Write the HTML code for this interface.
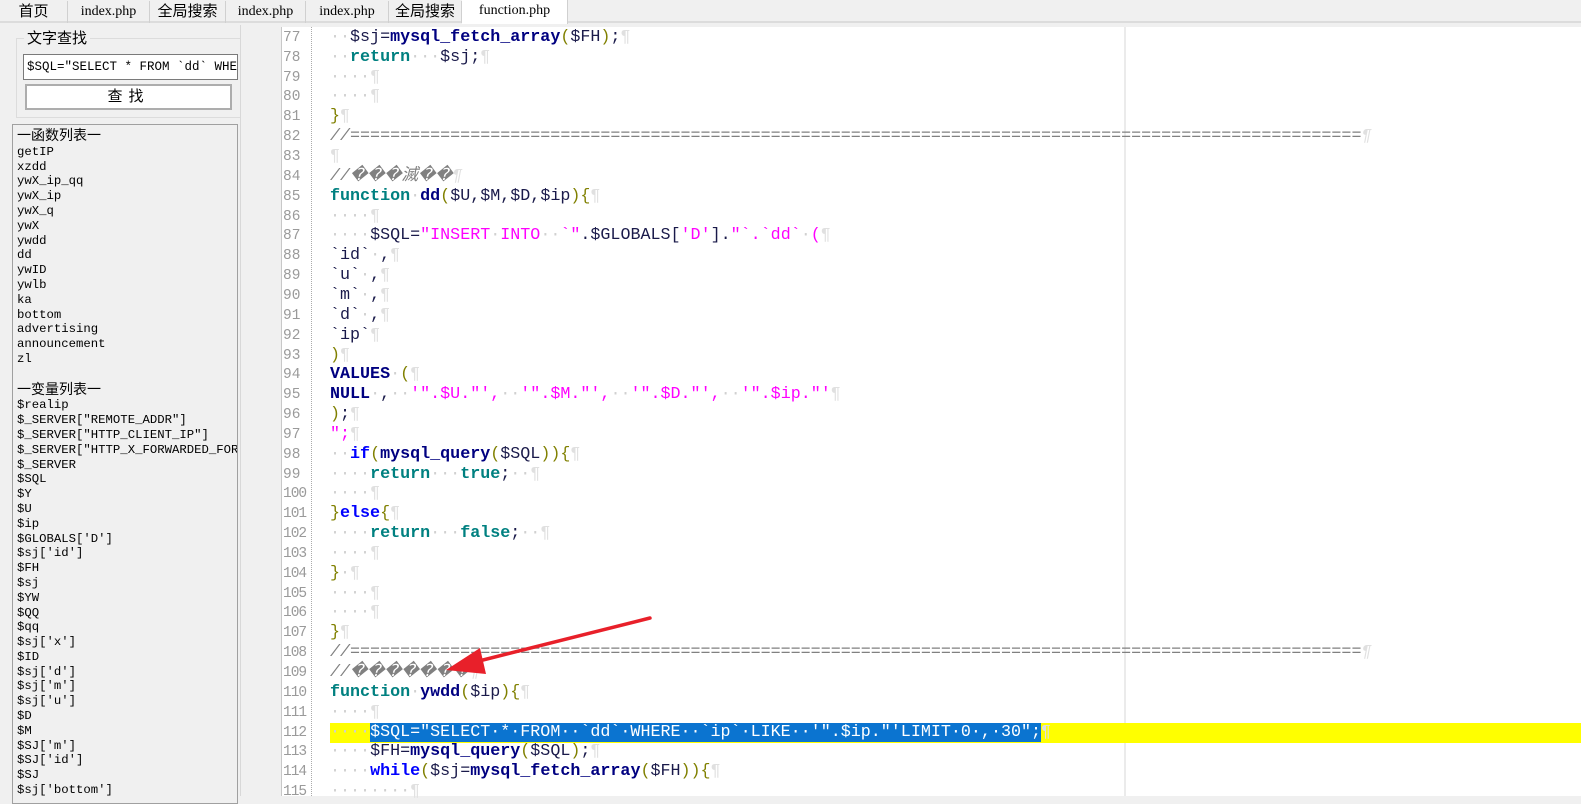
<!DOCTYPE html>
<html><head><meta charset="utf-8"><style>
*{margin:0;padding:0;box-sizing:border-box}
body{width:1581px;height:796px;overflow:hidden;background:#f0f0f0;position:relative;font-family:"Liberation Sans","Noto Sans CJK SC",sans-serif}
.tabs{position:absolute;left:0;top:0;width:1581px;height:23px;background:#f0f0f0;border-bottom:2px solid #dcdcdc}
.tab{position:absolute;top:1px;height:22px;border-right:1px solid #d0d0d0;font-size:15px;line-height:22px;text-align:center;color:#000}
.tab.m{font-family:"Liberation Serif","Noto Serif CJK SC",serif;font-size:14px}
.tab.act{background:#fff;top:0;height:24px}
.gb{position:absolute;left:16px;top:38px;width:225px;height:80px;border:1px solid #dcdcdc}
.gbl{position:absolute;left:24px;top:27px;background:#f0f0f0;padding:0 3px;font-size:15px}
.inp{position:absolute;left:23px;top:54px;width:215px;height:26px;background:#fff;border:1px solid #7a7a7a;font-family:"Liberation Mono",monospace;font-size:12.5px;line-height:24px;padding-left:3px;white-space:nowrap;overflow:hidden}
.btn{position:absolute;left:25px;top:84px;width:207px;height:26px;background:#fff;border:2px solid #adadad;font-size:15px;text-align:center;line-height:22px;letter-spacing:6px}
.list{position:absolute;left:12px;top:124px;width:226px;height:680px;border:1px solid #a0a0a0;background:#f0f0f0;overflow:hidden;padding:3px 0 0 4px;font-family:"Liberation Mono","Noto Sans CJK SC",monospace;font-size:12.3px;line-height:14.8px;white-space:pre;color:#000}
.list .h{font-family:"Liberation Sans","Noto Sans CJK SC",sans-serif;font-size:14px}
.sep{position:absolute;left:240px;top:25px;width:41px;height:771px;background:#f0f0f0;border-left:1px solid #d8d8d8}
.ed{position:absolute;left:281px;top:27px;width:1300px;height:769px;background:#fff;border-left:1px solid #c8c8c8}
.gut{position:absolute;left:282px;top:27px;width:30px;height:769px;border-right:1px dotted #aaa}
.guide{position:absolute;left:1124px;top:27px;width:2px;height:769px;background:#ebebeb}
.ln{position:absolute;left:283px;width:28px;font-family:"Liberation Mono",monospace;font-size:14.5px;color:#9a9a9a;height:20px;line-height:20px}
.cl{position:absolute;left:330px;height:20px;line-height:20px;font-family:"Liberation Mono",monospace;font-size:16.7px;white-space:pre;color:#1a1a4a}
.d{color:#d0d0d0;font-weight:normal}
.p{color:#e0e0e0;font-weight:normal}
.k{color:#008080;font-weight:bold}
.b{color:#0000ff;font-weight:bold}
.f{color:#000080;font-weight:bold}
.s{color:#ff00ff}
.c{color:#808080;font-style:italic}
.o{color:#808000}
.hl{position:absolute;left:330px;top:723px;width:1251px;height:20px;background:#ffff00}
.sel{background:#0b74d0;color:#fff}
</style></head><body>
<div class="tabs">
<div class="tab" style="left:0;width:68px">首页</div>
<div class="tab m" style="left:68px;width:82px">index.php</div>
<div class="tab" style="left:150px;width:76px">全局搜索</div>
<div class="tab m" style="left:226px;width:80px">index.php</div>
<div class="tab m" style="left:306px;width:83px">index.php</div>
<div class="tab" style="left:389px;width:73px">全局搜索</div>
<div class="tab m act" style="left:462px;width:106px">function.php</div>
</div>
<div class="gb"></div><div class="gbl">文字查找</div>
<div class="inp">$SQL="SELECT * FROM  `dd` WHERE</div>
<div class="btn">查找</div>
<div class="list"><span class="h">一函数列表一</span>
getIP
xzdd
ywX_ip_qq
ywX_ip
ywX_q
ywX
ywdd
dd
ywID
ywlb
ka
bottom
advertising
announcement
zl

<span class="h">一变量列表一</span>
$realip
$_SERVER["REMOTE_ADDR"]
$_SERVER["HTTP_CLIENT_IP"]
$_SERVER["HTTP_X_FORWARDED_FOR"]
$_SERVER
$SQL
$Y
$U
$ip
$GLOBALS['D']
$sj['id']
$FH
$sj
$YW
$QQ
$qq
$sj['x']
$ID
$sj['d']
$sj['m']
$sj['u']
$D
$M
$SJ['m']
$SJ['id']
$SJ
$sj['bottom']</div>
<div class="sep"></div>
<div class="ed"></div>
<div class="gut"></div>
<div class="guide"></div>
<div class="hl"></div>

<div class="cl" style="top:28px"><span class="d">··</span>$sj=<span class="f">mysql_fetch_array</span><span class="o">(</span>$FH<span class="o">)</span>;<span class="p">¶</span></div>
<div class="cl" style="top:48px"><span class="d">··</span><span class="k">return</span><span class="d">···</span>$sj;<span class="p">¶</span></div>
<div class="cl" style="top:68px"><span class="d">····</span><span class="p">¶</span></div>
<div class="cl" style="top:87px"><span class="d">····</span><span class="p">¶</span></div>
<div class="cl" style="top:107px"><span class="o">}</span><span class="p">¶</span></div>
<div class="cl c" style="top:127px">//=====================================================================================================<span class="p">¶</span></div>
<div class="cl" style="top:147px"><span class="p">¶</span></div>
<div class="cl c" style="top:167px">//���滅��<span class="p">¶</span></div>
<div class="cl" style="top:187px"><span class="k">function</span><span class="d">·</span><span class="f">dd</span><span class="o">(</span>$U,$M,$D,$ip<span class="o">){</span><span class="p">¶</span></div>
<div class="cl" style="top:207px"><span class="d">····</span><span class="p">¶</span></div>
<div class="cl" style="top:226px"><span class="d">····</span>$SQL=<span class="s">"INSERT<span class="d">·</span>INTO<span class="d">··</span>`"</span>.$GLOBALS[<span class="s">'D'</span>].<span class="s">"`.`dd`<span class="d">·</span>(</span><span class="p">¶</span></div>
<div class="cl" style="top:246px">`id`<span class="d">·</span>,<span class="p">¶</span></div>
<div class="cl" style="top:266px">`u`<span class="d">·</span>,<span class="p">¶</span></div>
<div class="cl" style="top:286px">`m`<span class="d">·</span>,<span class="p">¶</span></div>
<div class="cl" style="top:306px">`d`<span class="d">·</span>,<span class="p">¶</span></div>
<div class="cl" style="top:326px">`ip`<span class="p">¶</span></div>
<div class="cl" style="top:346px"><span class="o">)</span><span class="p">¶</span></div>
<div class="cl" style="top:365px"><span class="f">VALUES</span><span class="d">·</span><span class="o">(</span><span class="p">¶</span></div>
<div class="cl" style="top:385px"><span class="f">NULL</span><span class="d">·</span>,<span class="d">··</span><span class="s">'".$U."',<span class="d">··</span>'".$M."',<span class="d">··</span>'".$D."',<span class="d">··</span>'".$ip."'</span><span class="p">¶</span></div>
<div class="cl" style="top:405px"><span class="o">)</span>;<span class="p">¶</span></div>
<div class="cl" style="top:425px"><span class="s">";</span><span class="p">¶</span></div>
<div class="cl" style="top:445px"><span class="d">··</span><span class="b">if</span><span class="o">(</span><span class="f">mysql_query</span><span class="o">(</span>$SQL<span class="o">)){</span><span class="p">¶</span></div>
<div class="cl" style="top:465px"><span class="d">····</span><span class="k">return</span><span class="d">···</span><span class="k">true</span>;<span class="d">··</span><span class="p">¶</span></div>
<div class="cl" style="top:484px"><span class="d">····</span><span class="p">¶</span></div>
<div class="cl" style="top:504px"><span class="o">}</span><span class="b">else</span><span class="o">{</span><span class="p">¶</span></div>
<div class="cl" style="top:524px"><span class="d">····</span><span class="k">return</span><span class="d">···</span><span class="k">false</span>;<span class="d">··</span><span class="p">¶</span></div>
<div class="cl" style="top:544px"><span class="d">····</span><span class="p">¶</span></div>
<div class="cl" style="top:564px"><span class="o">}</span><span class="d">·</span><span class="p">¶</span></div>
<div class="cl" style="top:584px"><span class="d">····</span><span class="p">¶</span></div>
<div class="cl" style="top:603px"><span class="d">····</span><span class="p">¶</span></div>
<div class="cl" style="top:623px"><span class="o">}</span><span class="p">¶</span></div>
<div class="cl c" style="top:643px">//=====================================================================================================<span class="p">¶</span></div>
<div class="cl c" style="top:663px">//�������<span class="p">¶</span></div>
<div class="cl" style="top:683px"><span class="k">function</span><span class="d">·</span><span class="f">ywdd</span><span class="o">(</span>$ip<span class="o">){</span><span class="p">¶</span></div>
<div class="cl" style="top:703px"><span class="d">····</span><span class="p">¶</span></div>
<div class="cl" style="top:723px"><span class="d">····</span><span class="sel">$SQL="SELECT·*·FROM··`dd`·WHERE··`ip`·LIKE··'".$ip."'LIMIT·0·,·30";</span><span class="p">¶</span></div>
<div class="cl" style="top:742px"><span class="d">····</span>$FH=<span class="f">mysql_query</span><span class="o">(</span>$SQL<span class="o">)</span>;<span class="p">¶</span></div>
<div class="cl" style="top:762px"><span class="d">····</span><span class="b">while</span><span class="o">(</span>$sj=<span class="f">mysql_fetch_array</span><span class="o">(</span>$FH<span class="o">)){</span><span class="p">¶</span></div>
<div class="cl" style="top:782px"><span class="d">········</span><span class="p">¶</span></div>

<div class="ln" style="top:28px">77</div><div class="ln" style="top:48px">78</div><div class="ln" style="top:68px">79</div><div class="ln" style="top:87px">80</div><div class="ln" style="top:107px">81</div><div class="ln" style="top:127px">82</div><div class="ln" style="top:147px">83</div><div class="ln" style="top:167px">84</div><div class="ln" style="top:187px">85</div><div class="ln" style="top:207px">86</div><div class="ln" style="top:226px">87</div><div class="ln" style="top:246px">88</div><div class="ln" style="top:266px">89</div><div class="ln" style="top:286px">90</div><div class="ln" style="top:306px">91</div><div class="ln" style="top:326px">92</div><div class="ln" style="top:346px">93</div><div class="ln" style="top:365px">94</div><div class="ln" style="top:385px">95</div><div class="ln" style="top:405px">96</div><div class="ln" style="top:425px">97</div><div class="ln" style="top:445px">98</div><div class="ln" style="top:465px">99</div><div class="ln" style="top:484px;letter-spacing:-1px">100</div><div class="ln" style="top:504px;letter-spacing:-1px">101</div><div class="ln" style="top:524px;letter-spacing:-1px">102</div><div class="ln" style="top:544px;letter-spacing:-1px">103</div><div class="ln" style="top:564px;letter-spacing:-1px">104</div><div class="ln" style="top:584px;letter-spacing:-1px">105</div><div class="ln" style="top:603px;letter-spacing:-1px">106</div><div class="ln" style="top:623px;letter-spacing:-1px">107</div><div class="ln" style="top:643px;letter-spacing:-1px">108</div><div class="ln" style="top:663px;letter-spacing:-1px">109</div><div class="ln" style="top:683px;letter-spacing:-1px">110</div><div class="ln" style="top:703px;letter-spacing:-1px">111</div><div class="ln" style="top:723px;letter-spacing:-1px">112</div><div class="ln" style="top:742px;letter-spacing:-1px">113</div><div class="ln" style="top:762px;letter-spacing:-1px">114</div><div class="ln" style="top:782px;letter-spacing:-1px">115</div>

<svg style="position:absolute;left:0;top:0" width="1581" height="796">
<line x1="650" y1="618" x2="475" y2="662" stroke="#e8202a" stroke-width="3.5" stroke-linecap="round"/>
<polygon points="446,670 480,648 486,674" fill="#e8202a"/>
</svg>
</body></html>
